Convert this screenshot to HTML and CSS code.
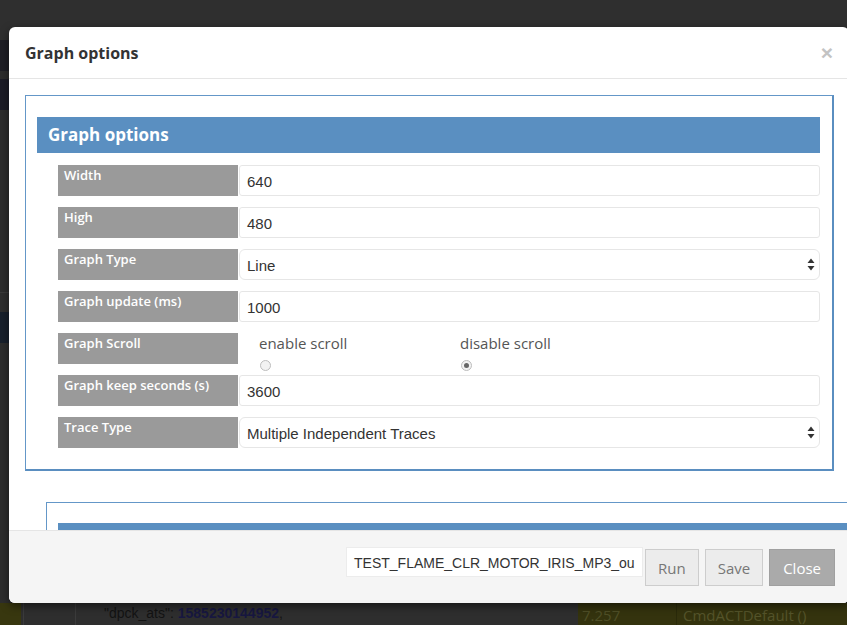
FILE: index.html
```html
<!DOCTYPE html>
<html>
<head>
<meta charset="utf-8">
<link rel="stylesheet" href="styles.css">
</head>
<body>
<div class="page">
  <div class="band b-top"></div>
  <div class="band b-dark1"></div>
  <div class="band b-gap1"></div>
  <div class="band b-dark2"></div>
  <div class="band b-mid"></div>
  <div class="band b-navy"></div>
  <div class="band b-rest"></div>
  <div class="band b-bottom">
    <div class="bb-olive-left"></div>
    <div class="bb-code">
      <div class="bb-gutter"></div>
      <div class="bb-gutter2"></div>
      <div class="bb-text">"dpck_ats": <span class="num">1585230144952</span>,</div>
    </div>
    <div class="bb-cell1">7.257</div>
    <div class="bb-cell2">CmdACTDefault ()</div>
  </div>
</div>

<div class="modal">
  <div class="modal-header">
    <h4 class="modal-title">Graph options</h4>
    <span class="modal-close">×</span>
  </div>
  <div class="modal-body">
    <div class="panel">
      <div class="panel-heading">Graph options</div>
      <div class="rows">
        <div class="row">
          <div class="label">Width</div>
          <div class="field"><span class="value">640</span></div>
        </div>
        <div class="row">
          <div class="label">High</div>
          <div class="field"><span class="value">480</span></div>
        </div>
        <div class="row">
          <div class="label">Graph Type</div>
          <div class="field select"><span class="value">Line</span>
            <svg class="arrows" width="8" height="13" viewBox="0 0 8 13"><path d="M4 0.5 L7.5 5 L0.5 5 Z M4 12.5 L7.5 8 L0.5 8 Z" fill="#333"/></svg>
          </div>
        </div>
        <div class="row">
          <div class="label">Graph update (ms)</div>
          <div class="field"><span class="value">1000</span></div>
        </div>
        <div class="row">
          <div class="label">Graph Scroll</div>
          <div class="radios">
            <div class="radio-col">
              <span class="radio-text">enable scroll</span>
              <span class="radio"></span>
            </div>
            <div class="radio-col">
              <span class="radio-text">disable scroll</span>
              <span class="radio checked"></span>
            </div>
          </div>
        </div>
        <div class="row">
          <div class="label">Graph keep seconds (s)</div>
          <div class="field"><span class="value">3600</span></div>
        </div>
        <div class="row">
          <div class="label">Trace Type</div>
          <div class="field select"><span class="value">Multiple Independent Traces</span>
            <svg class="arrows" width="8" height="13" viewBox="0 0 8 13"><path d="M4 0.5 L7.5 5 L0.5 5 Z M4 12.5 L7.5 8 L0.5 8 Z" fill="#333"/></svg>
          </div>
        </div>
      </div>
    </div>
    <div class="panel2">
      <div class="panel2-heading"></div>
    </div>
  </div>
  <div class="modal-footer">
    <div class="name-input">TEST_FLAME_CLR_MOTOR_IRIS_MP3_ou</div>
    <button class="btn">Run</button>
    <button class="btn">Save</button>
    <button class="btn btn-close">Close</button>
  </div>
</div>
</body>
</html>
```
FILE: styles.css
```css
html, body {
  margin: 0;
  padding: 0;
}
body {
  width: 847px;
  height: 625px;
  overflow: hidden;
  background: #2e2e2e;
  position: relative;
  font-family: "Open Sans", "Liberation Sans", sans-serif;
}
.page {
  display: flex;
  flex-direction: column;
  height: 625px;
}
.band { flex: none; }
.b-top { height: 40px; background: #2f2f2f; }
.b-dark1 { height: 31px; background: #1e1e25; }
.b-gap1 { height: 8px; background: #2c2c2c; }
.b-dark2 { height: 31px; background: #1c1c26; }
.b-mid { height: 182px; background: #2d2d2d; border-bottom: 1px solid #3a3a3a; }
.b-navy { height: 31px; background: #18202c; margin-top: 19px; }
.b-rest { flex: 1; background: #2d2d2d; }
.b-bottom {
  height: 22px;
  display: flex;
  background: #2e2e2e;
}
.bb-olive-left { width: 21px; background: #38370f; }
.bb-code {
  width: 557px;
  display: flex;
  background: #2e2e2e;
}
.bb-gutter { width: 2px; border-right: 1px solid #3b3b3b; }
.bb-gutter2 { width: 51px; border-right: 1px solid #3b3b3b; }
.bb-text {
  padding-left: 28px;
  font-family: "Liberation Sans", sans-serif;
  font-size: 14px;
  line-height: 20px;
  color: #131313;
}
.bb-text .num { color: #171740; font-weight: bold; }
.bb-cell1 {
  width: 94px;
  background: #34330e;
  border-right: 1px solid #2a2a0a;
  font-size: 15px;
  line-height: 24px;
  color: #4f4f26;
  padding-left: 4px;
  overflow: hidden;
}
.bb-cell2 {
  flex: 1;
  background: #34330e;
  font-size: 15px;
  line-height: 24px;
  color: #54542a;
  padding-left: 6px;
}

/* modal */
.modal {
  position: absolute;
  left: 9px;
  top: 27px;
  width: 840px;
  height: 576px;
  background: #fff;
  border-radius: 6px;
  overflow: hidden;
  display: flex;
  flex-direction: column;
  box-shadow: 0 3px 9px rgba(0,0,0,0.5);
}
.modal-header {
  height: 51px;
  border-bottom: 1px solid #e5e5e5;
  display: flex;
  align-items: center;
  justify-content: space-between;
  padding: 0 16px 0 16px;
  flex: none;
}
.modal-title {
  margin: 0;
  font-size: 16px;
  font-weight: 700;
  color: #333;
}
.modal-close {
  font-family: "Liberation Sans", sans-serif;
  font-size: 21px;
  font-weight: bold;
  color: #c3c3c3;
  line-height: 1;
}
.modal-body {
  flex: 1;
  overflow: hidden;
  padding: 16px 15px 0 16px;
}
.panel {
  border: 1px solid #6497c8;
  border-right: 2px solid #5a8ec0;
  border-bottom: 2px solid #5a8ec0;
  padding: 21px 12px 21px 11px;
}
.panel-heading {
  height: 36px;
  background: #5a8fc1;
  color: #fff;
  font-size: 17px;
  font-weight: 700;
  line-height: 36px;
  padding-left: 11px;
}
.rows {
  padding: 12px 0 0 21px;
  display: flex;
  flex-direction: column;
  gap: 11px;
}
.row {
  display: flex;
  height: 31px;
  flex: none;
}
.label {
  width: 174px;
  flex: none;
  background: #9a9a9a;
  color: #fff;
  font-size: 13px;
  font-weight: 600;
  line-height: 17px;
  padding: 2px 0 0 6px;
  height: 29px;
  margin-right: 1px;
}
.field {
  flex: 1;
  border: 1px solid #e6e6e6;
  border-radius: 3px;
  display: flex;
  align-items: center;
  padding: 0 4px 0 7px;
  font-family: "Liberation Sans", sans-serif;
  font-size: 15px;
  color: #333;
  box-sizing: border-box;
}
.field .value { flex: 1; padding-top: 1px; }
.field.select { border-radius: 6px; }
.radios {
  flex: 1;
  display: flex;
  height: 31px;
  overflow: visible;
}
.radio-col {
  width: 201px;
  box-sizing: border-box;
  display: flex;
  flex-direction: column;
  align-items: flex-start;
  padding-left: 20px;
  flex: none;
}
.radio-text {
  font-size: 15px;
  color: #555;
  line-height: 20px;
  flex: none;
}
.radio {
  flex: none;
  width: 11px;
  height: 11px;
  border-radius: 50%;
  border: 1px solid #bdbdbd;
  background: #f2f2f2;
  margin: 7px 0 0 1px;
  box-sizing: border-box;
  display: flex;
  align-items: center;
  justify-content: center;
}
.radio.checked::after {
  content: "";
  width: 5px;
  height: 5px;
  border-radius: 50%;
  background: #666;
}
.panel2 {
  margin: 31px 0 0 21px;
  width: 820px;
  border: 1px solid #6497c8;
  padding: 20px 0 0 11px;
}
.panel2-heading {
  height: 36px;
  background: #5a8fc1;
}
.modal-footer {
  flex: none;
  height: 72px;
  border-top: 1px solid #e5e5e5;
  background: #f5f5f5;
  display: flex;
  align-items: flex-start;
  justify-content: flex-end;
  padding: 0 14px 0 0;
}
.name-input {
  margin-top: 16px;
  width: 297px;
  height: 30px;
  background: #fff;
  border: 1px solid #ececec;
  font-family: "Liberation Sans", sans-serif;
  font-size: 14px;
  color: #333;
  line-height: 30px;
  padding-left: 7px;
  white-space: nowrap;
  box-sizing: border-box;
}
.btn {
  margin-top: 18px;
  margin-left: 2px;
  height: 37px;
  padding: 0 12px;
  background: #ececec;
  border: 1px solid #cdcdcd;
  color: #777;
  font-family: "Open Sans", sans-serif;
  font-size: 15px;
  border-radius: 0;
}
.btn + .btn { margin-left: 6px; }
.btn-close {
  margin-left: 5px;
  background: #aaa;
  border-color: #a0a0a0;
  color: #fff;
  padding: 0 13px;
}
```
